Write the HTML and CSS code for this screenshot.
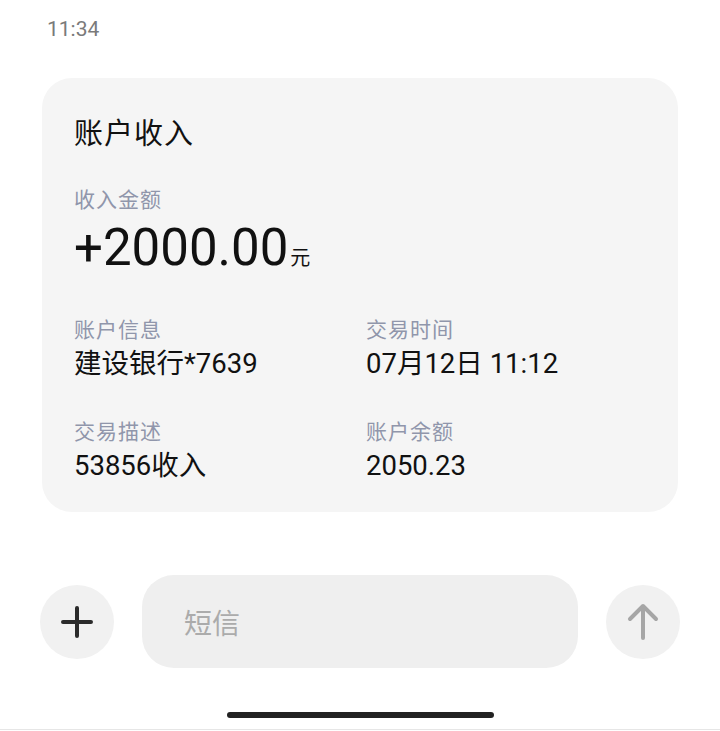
FILE: index.html
```html
<!DOCTYPE html>
<html>
<head>
    <meta charset="utf-8">
    <title>短信</title>
    <link rel="stylesheet" href="styles.css">
</head>
<body>
    <div class="status">
        <span class="time">11:34</span>
    </div>

    <div class="card">
        <div class="card-title">账户收入</div>
        <div class="label">收入金额</div>
        <div class="amount">+2000.00<span class="unit">元</span></div>
        <div class="info-grid">
            <div class="info">
                <div class="label">账户信息</div>
                <div class="value">建设银行*7639</div>
            </div>
            <div class="info">
                <div class="label">交易时间</div>
                <div class="value">07月12日 11:12</div>
            </div>
            <div class="info">
                <div class="label">交易描述</div>
                <div class="value">53856收入</div>
            </div>
            <div class="info">
                <div class="label">账户余额</div>
                <div class="value">2050.23</div>
            </div>
        </div>
    </div>

    <div class="composer">
        <button class="round-btn">
            <svg width="32" height="32" viewBox="0 0 32 32">
                <path d="M16 2 V30 M2 16 H30" stroke="#2b2b2b" stroke-width="4" stroke-linecap="round" fill="none"/>
            </svg>
        </button>
        <div class="input-box">短信</div>
        <button class="round-btn">
            <svg width="32" height="38" viewBox="0 0 32 38">
                <path d="M16 3 V35 M3 16 L16 3 L29 16" stroke="#a6a6a6" stroke-width="4" stroke-linecap="round" stroke-linejoin="round" fill="none"/>
            </svg>
        </button>
    </div>

    <div class="home-area">
        <div class="home-bar"></div>
    </div>
</body>
</html>
```

FILE: styles.css
```css
body {
    margin: 0;
    width: 720px;
    background: #fff;
    font-family: Roboto, "Noto Sans CJK SC", sans-serif;
    color: #111;
}
.status {
    height: 78px;
    padding-left: 47px;
    box-sizing: border-box;
    padding-top: 17px;
}
.time {
    font-size: 21px;
    line-height: 24px;
    color: #7a7a7a;
}
.card {
    margin: 0 42px;
    padding: 38px 32px 29px;
    background: #f5f5f5;
    border-radius: 30px;
}
.card-title {
    font-size: 29px;
    line-height: 36px;
    letter-spacing: 1px;
}
.label {
    font-size: 21px;
    line-height: 28px;
    color: #9096ab;
    letter-spacing: 1px;
}
.card-title + .label {
    margin-top: 34px;
}
.amount {
    font-size: 51px;
    line-height: 56px;
    margin-top: 6px;
}
.unit {
    font-size: 20px;
    margin-left: 2px;
}
.info-grid {
    display: grid;
    grid-template-columns: 292px 1fr;
    row-gap: 37px;
    margin-top: 30px;
}
.value {
    font-size: 27.5px;
    line-height: 34px;
    margin-top: 3px;
}
.composer {
    display: flex;
    align-items: center;
    gap: 28px;
    padding: 0 40px;
    margin-top: 63px;
}
.round-btn {
    width: 74px;
    height: 74px;
    flex: none;
    border: none;
    padding: 0;
    border-radius: 50%;
    background: #f1f1f1;
    display: flex;
    align-items: center;
    justify-content: center;
}
.input-box {
    flex: 1;
    height: 93px;
    border-radius: 32px;
    background: #efefef;
    padding-left: 42px;
    display: flex;
    align-items: center;
    font-size: 28px;
    color: #ababab;
}
.home-area {
    height: 62px;
    padding-top: 44px;
    box-sizing: border-box;
    border-bottom: 1px solid #e6e6e6;
}
.home-bar {
    width: 267px;
    height: 6px;
    margin: 0 auto;
    border-radius: 3px;
    background: #222;
}
```
